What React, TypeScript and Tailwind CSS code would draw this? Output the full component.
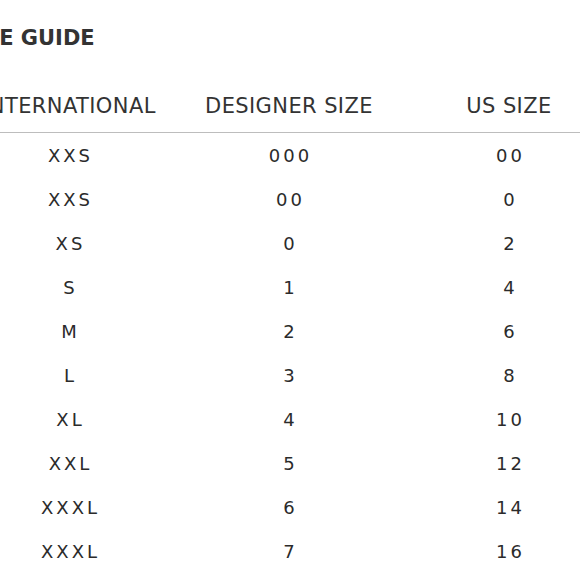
import React from "react";

const rows: [string, string, string][] = [
  ["XXS", "000", "00"],
  ["XXS", "00", "0"],
  ["XS", "0", "2"],
  ["S", "1", "4"],
  ["M", "2", "6"],
  ["L", "3", "8"],
  ["XL", "4", "10"],
  ["XXL", "5", "12"],
  ["XXXL", "6", "14"],
  ["XXXL", "7", "16"],
];

export default function App() {
  return (
    <div
      className="w-[580px] h-[580px] overflow-hidden bg-white text-[#333333]"
      style={{ fontFamily: '"DejaVu Sans", "Liberation Sans", sans-serif' }}
    >
      <div className="w-[660px] -ml-[41px]">
        <h1 className="h-[76px] pt-[25px] pl-[2px] text-[21px] font-bold leading-[26px]">
          SIZE GUIDE
        </h1>
        <div className="grid grid-cols-[220px_220px_220px] h-[57px] pt-[3px] items-center border-b border-[#bdbdbd] text-[21px] leading-[26px] tracking-[0.4px]">
          <div className="text-center">INTERNATIONAL</div>
          <div className="text-center">DESIGNER SIZE</div>
          <div className="text-center">US SIZE</div>
        </div>
        {rows.map((r, i) => (
          <div
            key={i}
            className="grid grid-cols-[220px_220px_220px] h-[44px] pt-[2px] items-center text-[18px] leading-[22px] tracking-[3px] text-[#2b2b2b]"
          >
            <div className="text-center pl-[3px]">{r[0]}</div>
            <div className="text-center pl-[3px]">{r[1]}</div>
            <div className="text-center pl-[3px]">{r[2]}</div>
          </div>
        ))}
      </div>
    </div>
  );
}
